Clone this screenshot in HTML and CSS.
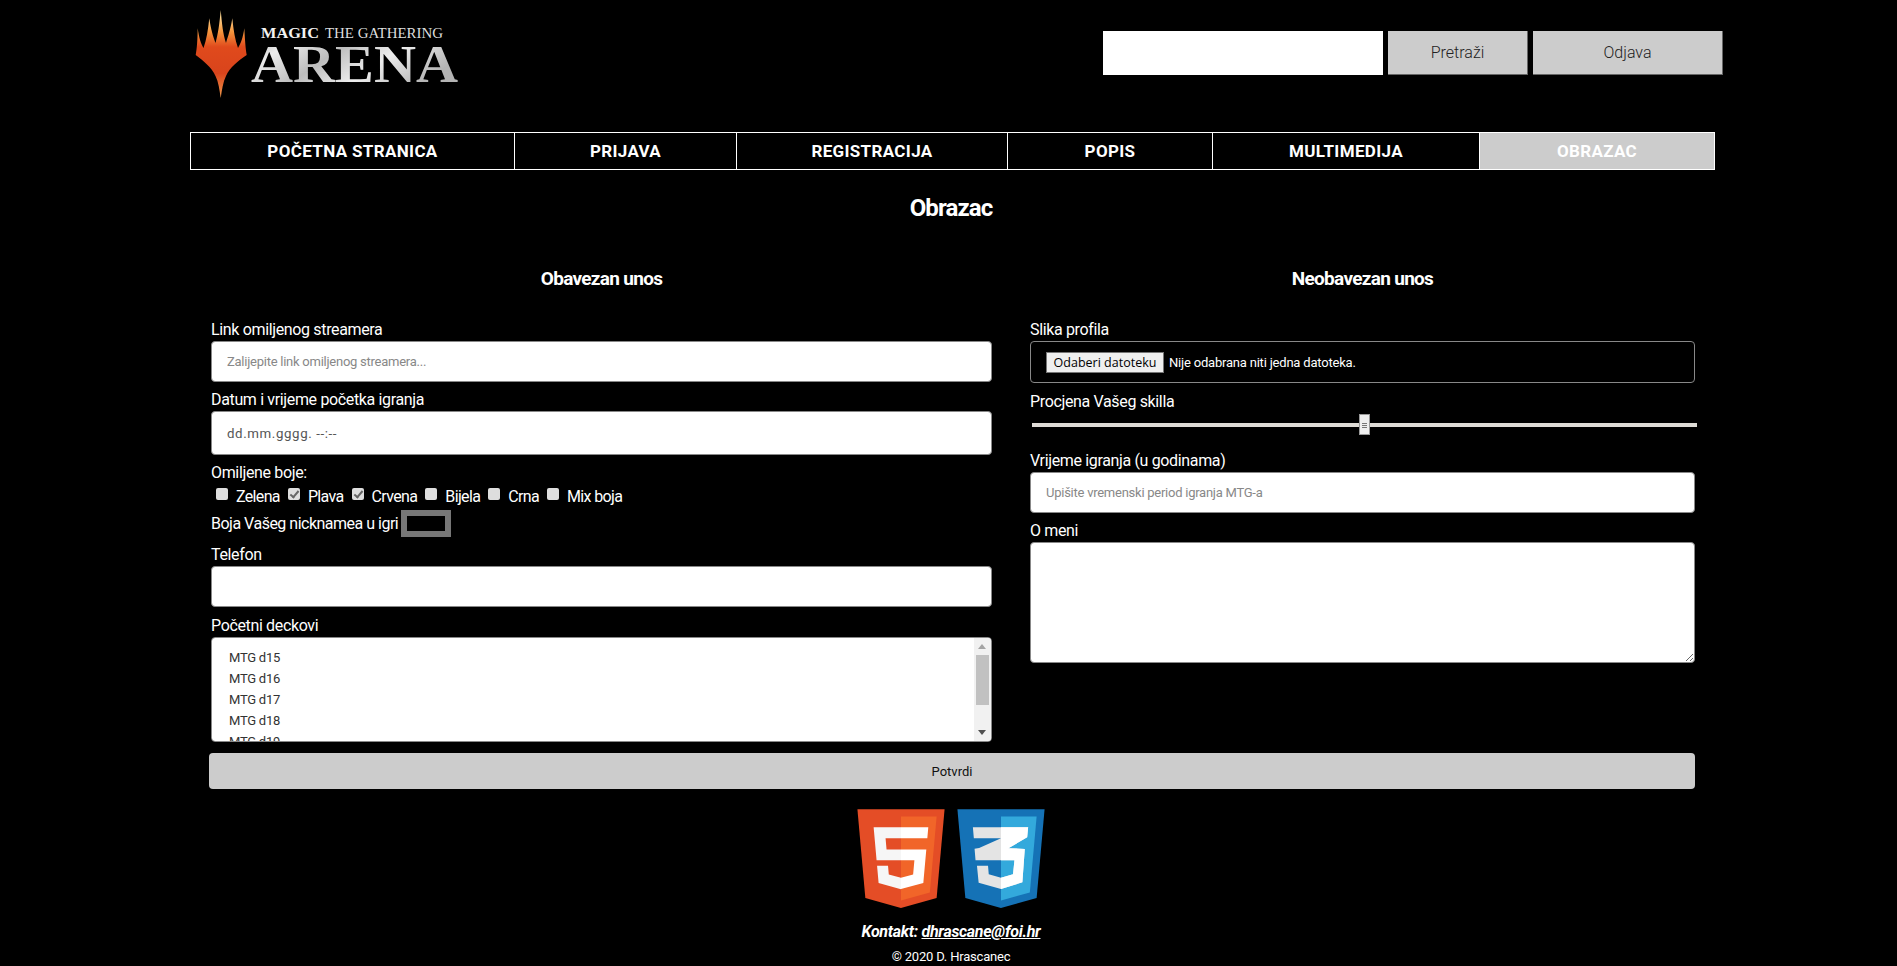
FILE: index.html
```html
<!DOCTYPE html>
<html lang="hr">
<head>
    <meta charset="utf-8">
    <title>Obrazac</title>
    <link rel="stylesheet" href="styles.css">
</head>
<body>

<header class="top">
    <a class="logo" href="#">
        <svg width="270" height="90" viewBox="0 0 270 90" aria-hidden="true">
            <defs>
                <linearGradient id="flame" x1="0" y1="0" x2="0" y2="1">
                    <stop offset="0.08" stop-color="#fbd48f"/>
                    <stop offset="0.25" stop-color="#f4943c"/>
                    <stop offset="0.42" stop-color="#e04a1c"/>
                    <stop offset="0.72" stop-color="#d9441c"/>
                    <stop offset="1" stop-color="#ef9a4c"/>
                </linearGradient>
                <linearGradient id="silver" x1="0" y1="0" x2="1" y2="0.4">
                    <stop offset="0" stop-color="#aeaeae"/>
                    <stop offset="0.2" stop-color="#ececec"/>
                    <stop offset="0.45" stop-color="#bdbdbd"/>
                    <stop offset="0.7" stop-color="#eeeeee"/>
                    <stop offset="1" stop-color="#b4b4b4"/>
                </linearGradient>
            </defs>
            <path fill="url(#flame)" d="M25.7 0C27 14 28 24 31 33C33 26 35.5 20 37.3 8.3C38.5 20 40 30 43 38C45.5 34 48 28 49.3 18.3C50 30 50.5 38 51.7 45C43 51 35 57 31 66C28 72 27 80 25.7 88C24.5 80 23.5 72 20.5 66C16.5 57 8.5 51 .7 45C2 38 2.5 30 2.7 18.3C4 28 6 34 8.5 38C11.5 30 13 20 14.3 8.3C16 20 18 26 20.5 33C23 24 24.5 14 25.7 0Z"/>
            <text class="logo-small logo-magic" x="66" y="28" textLength="58" lengthAdjust="spacingAndGlyphs">MAGIC</text>
            <text class="logo-small" x="130" y="28" textLength="118" lengthAdjust="spacingAndGlyphs">THE GATHERING</text>
            <text class="logo-big" x="56" y="72" textLength="207" lengthAdjust="spacingAndGlyphs" fill="url(#silver)">ARENA</text>
        </svg>
    </a>
    <form class="search">
        <input class="search-input" type="text">
        <button class="search-btn" type="button">Pretraži</button>
        <button class="search-btn logout" type="button">Odjava</button>
    </form>
</header>

<nav class="menu">
    <a href="#">POČETNA STRANICA</a>
    <a href="#">PRIJAVA</a>
    <a href="#">REGISTRACIJA</a>
    <a href="#">POPIS</a>
    <a href="#">MULTIMEDIJA</a>
    <a class="active" href="#">OBRAZAC</a>
</nav>

<h1>Obrazac</h1>

<form class="form">
    <div class="columns">
        <section class="col">
            <h2>Obavezan unos</h2>
            <label class="lbl">Link omiljenog streamera</label>
            <input class="field" type="text" placeholder="Zalijepite link omiljenog streamera...">
            <label class="lbl">Datum i vrijeme početka igranja</label>
            <input class="field date" type="text" value="dd.mm.gggg. --:--">
            <label class="lbl">Omiljene boje:</label>
            <div class="checks">
                <label><input type="checkbox">Zelena</label>
                <label><input type="checkbox" checked>Plava</label>
                <label><input type="checkbox" checked>Crvena</label>
                <label><input type="checkbox">Bijela</label>
                <label><input type="checkbox">Crna</label>
                <label><input type="checkbox">Mix boja</label>
            </div>
            <div class="color-row">
                <label>Boja Vašeg nicknamea u igri</label>
                <span class="color-box"></span>
            </div>
            <label class="lbl">Telefon</label>
            <input class="field tel" type="tel">
            <label class="lbl">Početni deckovi</label>
            <div class="decks-wrap">
                <select class="field decks" multiple>
                    <option>MTG d15</option>
                    <option>MTG d16</option>
                    <option>MTG d17</option>
                    <option>MTG d18</option>
                    <option>MTG d19</option>
                    <option>MTG d20</option>
                </select>
                <!-- the browser hides the native bar in the shot -->
                <div class="scrollbar">
                    <span class="arrow-up"></span>
                    <span class="thumb"></span>
                    <span class="arrow-down"></span>
                </div>
            </div>
        </section>

        <section class="col">
            <h2>Neobavezan unos</h2>
            <label class="lbl">Slika profila</label>
            <div class="file-box">
                <button class="file-btn" type="button">Odaberi datoteku</button>
                <span>Nije odabrana niti jedna datoteka.</span>
            </div>
            <label class="lbl">Procjena Vašeg skilla</label>
            <input class="skill" type="range" min="0" max="100" value="50">
            <label class="lbl">Vrijeme igranja (u godinama)</label>
            <input class="field" type="text" placeholder="Upišite vremenski period igranja MTG-a">
            <label class="lbl">O meni</label>
            <textarea class="field about"></textarea>
        </section>
    </div>
    <button class="submit" type="button">Potvrdi</button>
</form>

<footer>
    <div class="badges">
        <svg width="88" height="99" viewBox="74 100 364 412" aria-label="HTML5">
            <polygon fill="#E44D26" points="107.644,470.877 74.633,100.62 437.367,100.62 404.321,470.819 255.778,512"/>
            <polygon fill="#F16529" points="256,480.523 376.03,447.246 404.27,130.894 256,130.894"/>
            <polygon fill="#F6F6F6" points="256,268.217 195.91,268.217 191.76,221.716 256,221.716 256,176.305 142.132,176.305 143.219,188.488 154.38,313.627 256,313.627"/>
            <polygon fill="#F6F6F6" points="256,386.153 255.801,386.206 205.227,372.55 201.994,336.333 156.409,336.333 162.771,407.634 255.791,433.457 256,433.399"/>
            <polygon fill="#FFFFFF" points="255.843,268.217 255.843,313.627 311.761,313.627 306.49,372.521 255.843,386.191 255.843,433.435 348.937,407.634 349.62,399.962 360.291,280.411 361.399,268.217"/>
            <polygon fill="#FFFFFF" points="255.843,176.305 255.843,221.716 365.531,221.716 366.442,211.509 368.511,188.488 369.597,176.305"/>
        </svg>
        <svg width="88" height="99" viewBox="74 100 364 412" aria-label="CSS3">
            <defs>
                <clipPath id="right-half"><rect x="256" y="100" width="182" height="412"/></clipPath>
            </defs>
            <polygon fill="#1572B6" points="107.644,470.877 74.633,100.62 437.367,100.62 404.321,470.819 255.778,512"/>
            <polygon fill="#33A9DC" points="256,480.523 376.03,447.246 404.27,130.894 256,130.894"/>
            <polygon fill="#E4E4E4" points="139,176 369,176 365,218 287,263 355,266 345,405 256,433 163,407 156,336 202,336 205,372 256,386 306,372 312,313 150,313 146,265 165,262 256,222 143,222"/>
            <polygon fill="#FFFFFF" clip-path="url(#right-half)" points="139,176 369,176 365,218 287,263 355,266 345,405 256,433 163,407 156,336 202,336 205,372 256,386 306,372 312,313 150,313 146,265 165,262 256,222 143,222"/>
        </svg>
    </div>
    <p class="contact">Kontakt: <a href="#">dhrascane@foi.hr</a></p>
    <p class="copy">© 2020 D. Hrascanec</p>
</footer>

</body>
</html>
```

FILE: styles.css
```css
html {
    height: 100%;
    overflow: hidden;
}

body {
    margin: 0;
    background: #000;
    color: #fff;
    font-family: Roboto, "Liberation Sans", sans-serif;
    font-size: 16px;
    letter-spacing: -0.35px;
}

a {
    color: inherit;
}

.top {
    display: flex;
    justify-content: space-between;
    height: 132px;
    padding-left: 195px;
    padding-right: 174px;
    box-sizing: border-box;
}

.logo {
    display: block;
    margin-top: 10px;
    height: 90px;
}

.logo-small {
    font-family: "Liberation Serif", serif;
    font-size: 14px;
    fill: #dedede;
    letter-spacing: 0;
}

.logo-magic {
    font-weight: bold;
    fill: #f2f2f2;
}

.logo-big {
    font-family: "Liberation Serif", serif;
    font-size: 53px;
    font-weight: bold;
    letter-spacing: 0;
}

.search {
    display: flex;
    gap: 5px;
    margin-top: 31px;
    height: 44px;
}

.search-input {
    width: 280px;
    border: 0;
    padding: 0;
    background: #fff;
}

.search-btn {
    width: 140px;
    border: 0;
    border-right: 1px solid #666;
    border-bottom: 1px solid #666;
    background: #ccc;
    color: #222;
    font-family: inherit;
    font-size: 16px;
    font-weight: 300;
}

.logout {
    width: 190px;
}

.menu {
    display: grid;
    grid-template-columns: 324px 222px 271px 205px 267px 234px;
    margin-left: 190px;
    width: 1525px;
    box-sizing: border-box;
    border: 1px solid #fff;
    height: 38px;
}

.menu a {
    display: flex;
    align-items: center;
    justify-content: center;
    border-right: 1px solid #fff;
    font-size: 17px;
    font-weight: bold;
    letter-spacing: 0.35px;
    text-decoration: none;
}

.menu a:last-child {
    border-right: 0;
}

.menu .active {
    background: #ccc;
}

h1 {
    margin: 20px 0 0;
    padding-left: 5px;
    text-align: center;
    font-size: 24px;
    line-height: 36px;
    letter-spacing: -0.9px;
}

.form {
    width: 1486px;
    margin: 0 0 0 209px;
}

.columns {
    display: grid;
    grid-template-columns: 781px 665px;
    column-gap: 38px;
    margin-left: 2px;
    height: 527px;
}

.col {
    display: flex;
    flex-direction: column;
}

h2 {
    margin: 38px 0 24px;
    text-align: center;
    font-size: 19px;
    line-height: 30px;
    letter-spacing: -0.7px;
}

.lbl {
    line-height: 24px;
    height: 22px;
    margin-bottom: 1px;
}

.field {
    box-sizing: border-box;
    width: 100%;
    height: 41px;
    margin-bottom: 6px;
    padding: 0 15px;
    border: 1px solid #888;
    border-radius: 4px;
    background: #fff;
    font-family: inherit;
    font-size: 13px;
    letter-spacing: -0.25px;
    color: #333;
}

.field::placeholder {
    color: #888;
}

.date {
    height: 44px;
    font-size: 13.3px;
    letter-spacing: 0.6px;
    color: #555;
}

.tel {
    margin-bottom: 7px;
}

.decks-wrap {
    position: relative;
    height: 105px;
}

.decks {
    display: block;
    height: 105px;
    padding: 12px 17px;
    margin: 0;
}

.decks option {
    padding: 0;
    height: 21px;
    line-height: 21px;
    min-height: 21px;
}

.scrollbar {
    position: absolute;
    top: 1px;
    right: 1px;
    bottom: 1px;
    width: 17px;
    background: #f1f1f1;
    border-radius: 0 3px 3px 0;
}

.thumb {
    position: absolute;
    top: 17px;
    left: 2px;
    width: 13px;
    height: 50px;
    background: #c1c1c1;
}

.arrow-up,
.arrow-down {
    position: absolute;
    left: 4px;
    border-left: 4.5px solid transparent;
    border-right: 4.5px solid transparent;
}

.arrow-up {
    top: 6px;
    border-bottom: 5px solid #a3a3a3;
}

.arrow-down {
    bottom: 6px;
    border-top: 5px solid #505050;
}

.checks {
    display: flex;
    gap: 8px;
    margin: 0 0 0 5px;
    height: 24px;
    align-items: center;
    letter-spacing: -0.65px;
}

.checks label {
    display: flex;
    align-items: center;
}

.checks input {
    appearance: none;
    position: relative;
    width: 12px;
    height: 12px;
    margin: 0 8px 4px 0;
    border-radius: 2px;
    background: #dedede;
}

.checks input:checked::after {
    content: "";
    position: absolute;
    left: 4px;
    top: 1px;
    width: 3px;
    height: 7px;
    border: solid #666;
    border-width: 0 2px 2px 0;
    transform: rotate(40deg);
}

.color-row {
    display: flex;
    align-items: center;
    gap: 3px;
    height: 27px;
    margin: 2px 0 6px;
    letter-spacing: -0.5px;
}

.color-box {
    box-sizing: border-box;
    width: 50px;
    height: 27px;
    border: 6px solid #777;
    background: #000;
}

.file-box {
    box-sizing: border-box;
    display: flex;
    align-items: center;
    gap: 5px;
    height: 42px;
    margin-bottom: 7px;
    padding-left: 15px;
    border: 1px solid #888;
    border-radius: 4px;
    font-size: 13px;
    letter-spacing: -0.2px;
}

.file-btn {
    width: 118px;
    height: 21px;
    padding: 0;
    border: 1px solid #767676;
    background: #efefef;
    color: #000;
    font-family: "Open Sans", sans-serif;
    font-size: 12.5px;
    letter-spacing: 0;
}

.skill {
    appearance: none;
    display: block;
    width: 665px;
    height: 22px;
    margin: 1px 0 13px 2px;
    background: transparent;
}

.skill::-webkit-slider-runnable-track {
    height: 4px;
    background: #dedbd6;
}

.skill::-webkit-slider-thumb {
    appearance: none;
    box-sizing: border-box;
    width: 11px;
    height: 21px;
    margin-top: -9px;
    border: 1px solid #999;
    background: linear-gradient(#efefef 0 8px, #777 8px 9px, #efefef 9px 10px, #777 10px 11px, #efefef 11px 12px, #777 12px 13px, #efefef 13px);
    background-size: 5px 100%;
    background-repeat: no-repeat;
    background-position: center;
    background-color: #efefef;
}

.about {
    height: 121px;
    margin: 0;
    display: block;
}

.submit {
    display: block;
    width: 100%;
    height: 36px;
    border: 0;
    border-radius: 4px;
    background: #ccc;
    color: #111;
    font-family: inherit;
    font-size: 13px;
}

footer {
    padding-left: 5px;
    text-align: center;
}

.badges {
    display: flex;
    justify-content: center;
    gap: 12px;
    margin-top: 20px;
    height: 99px;
}

.contact {
    margin: 14px 0 0;
    font-size: 16px;
    font-weight: bold;
    font-style: italic;
    line-height: 20px;
    letter-spacing: -0.3px;
}

.copy {
    margin: 6px 0 0;
    font-size: 13px;
    line-height: 18px;
    letter-spacing: -0.2px;
}
```
